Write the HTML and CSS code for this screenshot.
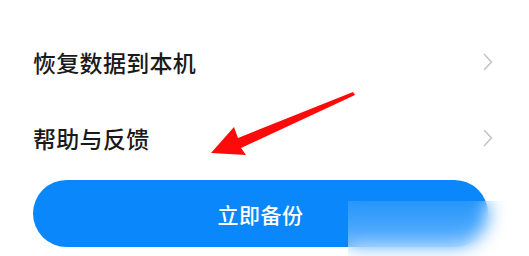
FILE: index.html
```html
<!DOCTYPE html>
<html lang="zh-CN">
<head>
<meta charset="utf-8">
<title>备份</title>
<link rel="stylesheet" href="styles.css">
</head>
<body>
<div class="page">
  <div class="list">
    <div class="row">
      <span class="label">恢复数据到本机</span>
      <svg class="chev" width="10" height="18" viewBox="0 0 10 18"><polyline points="1.5,1.5 8.5,9 1.5,16.5" fill="none" stroke="#c2c2c2" stroke-width="1.5" stroke-linecap="round" stroke-linejoin="round"/></svg>
    </div>
    <div class="row">
      <span class="label">帮助与反馈</span>
      <svg class="chev" width="10" height="18" viewBox="0 0 10 18"><polyline points="1.5,1.5 8.5,9 1.5,16.5" fill="none" stroke="#c2c2c2" stroke-width="1.5" stroke-linecap="round" stroke-linejoin="round"/></svg>
    </div>
  </div>
  <div class="btn">立即备份</div>
  <svg class="arrow" width="529" height="256" viewBox="0 0 529 256"><path d="M353,92 L238,138 L234,127 L211,153 L246,155 L241,148 L355,95 Z" fill="#ff0a0a"/></svg>
  <div class="blur"></div>
</div>
</body>
</html>
```
FILE: styles.css
```css
html, body {
  margin: 0;
  padding: 0;
  background: #ffffff;
}
.page {
  position: relative;
  width: 529px;
  height: 256px;
  overflow: hidden;
  font-family: "Noto Sans CJK SC", "Noto Sans", sans-serif;
  padding: 24px 36px 0 33px;
  box-sizing: border-box;
}
.list {
  display: flex;
  flex-direction: column;
}
.row {
  height: 76px;
  display: flex;
  align-items: center;
  justify-content: space-between;
}
.label {
  font-size: 23px;
  font-weight: 500;
  color: #1a1a1a;
  letter-spacing: 0.3px;
}
.chev {
  display: block;
}
.btn {
  margin-top: 4px;
  width: 455px;
  height: 67px;
  border-radius: 34px;
  background: #0a88fb;
  color: #ffffff;
  font-size: 21px;
  font-weight: 500;
  display: flex;
  align-items: center;
  justify-content: center;
  letter-spacing: 0.5px;
}
.arrow {
  position: absolute;
  left: 0;
  top: 0;
}
.blur {
  position: absolute;
  left: 348px;
  top: 201px;
  width: 181px;
  height: 55px;
  backdrop-filter: blur(9px);
  background: linear-gradient(to bottom, rgba(255, 255, 255, 0.12), rgba(255, 255, 255, 0.4));
}
```
